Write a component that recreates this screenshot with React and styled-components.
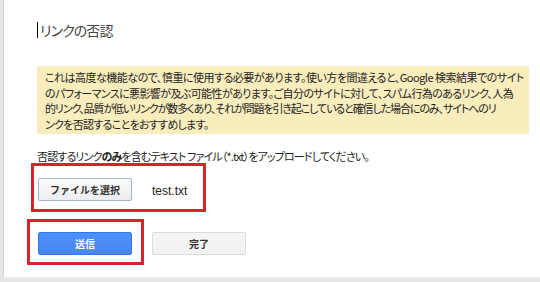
import React from "react";
import styled, { createGlobalStyle } from "styled-components";

const Global = createGlobalStyle`
  html, body { margin: 0; padding: 0; background: #fff; }
  body { font-family: "Noto Sans CJK JP", "Liberation Sans", sans-serif; }
`;

const Page = styled.div`
  width: 540px;
  height: 282px;
  box-sizing: border-box;
  background: #e6e6e6;
  padding: 0 0 4px 3px;
  display: flex;
`;

const Card = styled.div`
  flex: 1;
  background: #fff;
  border-left: 1px solid #d6d6d6;
  border-bottom: 1px solid #f2f2f2;
  box-sizing: border-box;
  padding: 21px 10px 0 33px;
  display: flex;
  flex-direction: column;
`;

const Title = styled.h1`
  margin: 0;
  height: 18px;
  display: flex;
  align-items: center;
  font-size: 14px;
  font-weight: 400;
  color: #444;
  letter-spacing: -0.9px;
  font-feature-settings: "palt";
`;

const Caret = styled.span`
  display: inline-block;
  width: 1px;
  height: 16px;
  background: #000;
  margin-right: 2px;
`;

const Notice = styled.div`
  margin-top: 27px;
  height: 68px;
  box-sizing: border-box;
  width: 492px;
  background: #f9edbe;
  padding: 4px 0 0 8px;
  font-size: 11px;
  line-height: 15.5px;
  color: #222;
  font-feature-settings: "palt";
`;

const Line = styled.div`
  white-space: nowrap;
  letter-spacing: ${(p) => p.$ls}px;
`;

const Instruction = styled.p`
  margin: 16px 0 0 0;
  font-size: 11px;
  line-height: 13px;
  color: #222;
  white-space: nowrap;
  font-feature-settings: "palt";
  letter-spacing: -0.85px;
  b { font-weight: 700; }
`;

const Highlight = styled.div`
  display: flex;
  align-items: flex-start;
  gap: ${(p) => p.$gap}px;
  border: 3px solid #d7232c;
  box-sizing: border-box;
  width: ${(p) => p.$w}px;
  height: ${(p) => p.$h}px;
  margin: ${(p) => p.$mt}px 0 0 ${(p) => p.$ml}px;
  padding: ${(p) => p.$pt}px 0 0 ${(p) => p.$pl}px;
`;

const Button = styled.button`
  width: 94px;
  height: 23px;
  box-sizing: border-box;
  border-radius: 2px;
  font-family: "Noto Sans CJK JP", "Liberation Sans", sans-serif;
  font-size: 10px;
  font-weight: 700;
  padding: 0;
  margin-top: ${(p) => p.$mt || 0}px;
  display: flex;
  align-items: center;
  justify-content: center;
  border: 1px solid ${(p) => (p.$variant === "primary" ? "#3079ed" : p.$variant === "file" ? "#a5b3c6" : "#dcdcdc")};
  background: ${(p) =>
    p.$variant === "primary"
      ? "linear-gradient(#4d90fe, #4787ed)"
      : p.$variant === "file"
      ? "linear-gradient(#fbfbfb, #ededed)"
      : "linear-gradient(#f5f5f5, #f1f1f1)"};
  color: ${(p) => (p.$variant === "primary" ? "#fff" : "#333")};
  flex-shrink: 0;
`;

const FileName = styled.span`
  font-family: "Liberation Sans", sans-serif;
  font-size: 12px;
  color: #222;
  line-height: 23px;
  margin-top: 2px;
`;

const ButtonRow = styled.div`
  display: flex;
  align-items: flex-start;
  gap: 8px;
  margin-top: 7px;
`;

export default function App() {
  return (
    <>
      <Global />
      <Page>
        <Card>
          <Title>
            <Caret />
            リンクの否認
          </Title>
          <Notice>
            <Line $ls={-0.5}>これは高度な機能なので、慎重に使用する必要があります。使い方を間違えると、Google 検索結果でのサイト</Line>
            <Line $ls={-0.6}>のパフォーマンスに悪影響が及ぶ可能性があります。ご自分のサイトに対して、スパム行為のあるリンク、人為</Line>
            <Line $ls={-1.1}>的リンク、品質が低いリンクが数多くあり、それが問題を引き起こしていると確信した場合にのみ、サイトへのリ</Line>
            <Line $ls={-0.7}>ンクを否認することをおすすめします。</Line>
          </Notice>
          <Instruction>
            否認するリンク<b>のみ</b>を含むテキスト ファイル（*.txt）をアップロードしてください。
          </Instruction>
          <Highlight $w={175} $h={49} $mt={0} $ml={-6} $pt={12} $pl={4} $gap={20}>
            <Button $variant="file">ファイルを選択</Button>
            <FileName>test.txt</FileName>
          </Highlight>
          <ButtonRow>
            <Highlight $w={117} $h={46} $mt={0} $ml={-10} $pt={10} $pl={8} $gap={0}>
              <Button $variant="primary">送信</Button>
            </Highlight>
            <Button $variant="default" $mt={13}>完了</Button>
          </ButtonRow>
        </Card>
      </Page>
    </>
  );
}
